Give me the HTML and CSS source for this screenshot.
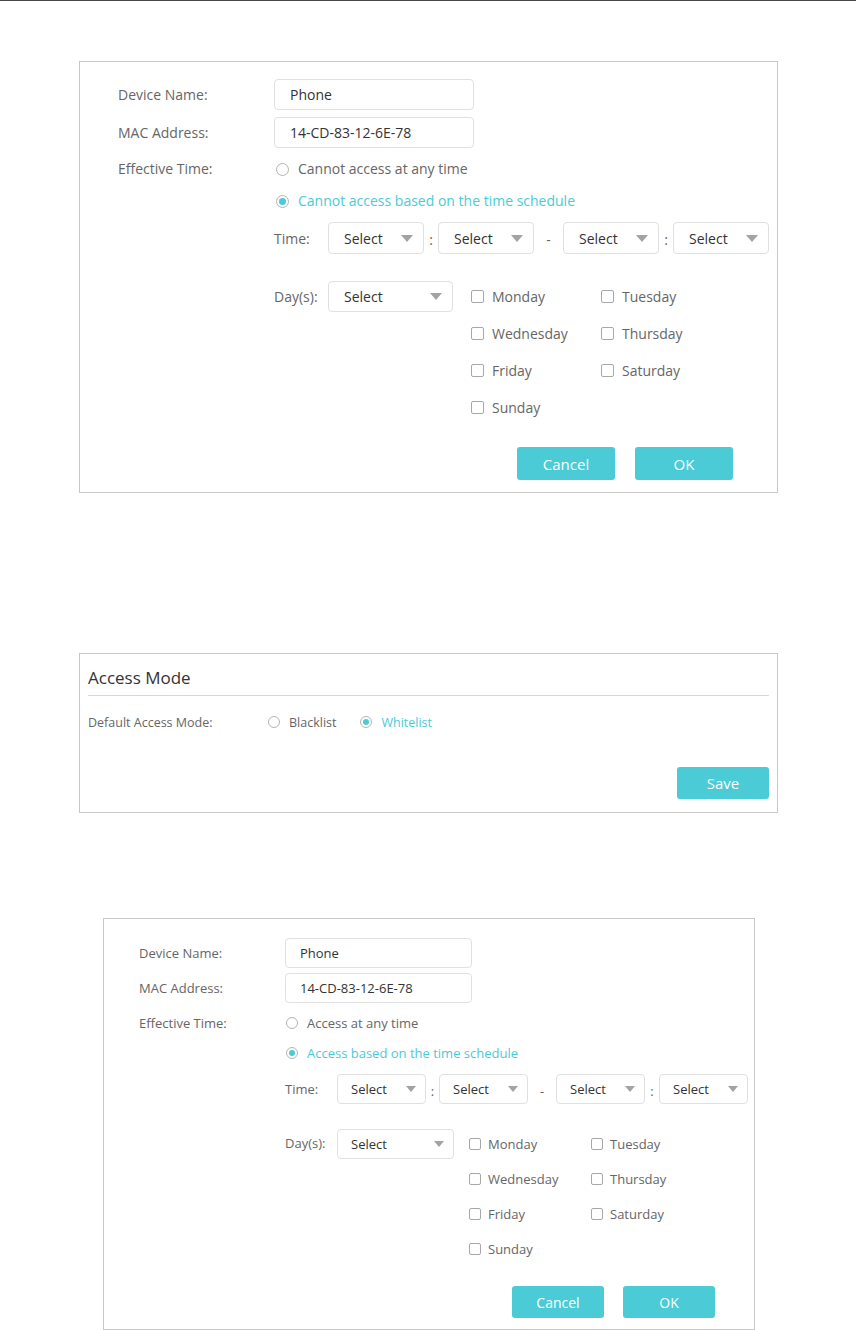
FILE: index.html
```html
<!DOCTYPE html>
<html>
<head>
  <meta charset="utf-8">
  <title>Access Control</title>
  <link rel="stylesheet" href="styles.css">
</head>
<body>
  <div class="top-rule"></div>

  <!-- Blacklist device form -->
  <div class="panel form form-a">
    <div class="field-row row-input">
      <label class="field-label">Device Name:</label>
      <div class="text-input">Phone</div>
    </div>
    <div class="field-row row-input">
      <label class="field-label">MAC Address:</label>
      <div class="text-input">14-CD-83-12-6E-78</div>
    </div>
    <div class="field-row row-radios">
      <label class="field-label radio-line">Effective Time:</label>
      <div class="radio-stack">
        <div class="radio radio-line"><span class="dot"></span>Cannot access at any time</div>
        <div class="radio radio-line checked"><span class="dot"></span>Cannot access based on the time schedule</div>
      </div>
    </div>
    <div class="field-row">
      <div class="field-label"></div>
      <div class="schedule">
        <div class="time-row">
          <span class="mini-label">Time:</span>
          <div class="select"><span>Select</span><i class="caret"></i></div>
          <span class="sep">:</span>
          <div class="select"><span>Select</span><i class="caret"></i></div>
          <span class="sep wide">-</span>
          <div class="select"><span>Select</span><i class="caret"></i></div>
          <span class="sep sep-last">:</span>
          <div class="select"><span>Select</span><i class="caret"></i></div>
        </div>
        <div class="days-row">
          <span class="mini-label">Day(s):</span>
          <div class="select day-select"><span>Select</span><i class="caret"></i></div>
          <div class="day-grid">
            <div class="check"><span class="box"></span>Monday</div>
            <div class="check"><span class="box"></span>Tuesday</div>
            <div class="check"><span class="box"></span>Wednesday</div>
            <div class="check"><span class="box"></span>Thursday</div>
            <div class="check"><span class="box"></span>Friday</div>
            <div class="check"><span class="box"></span>Saturday</div>
            <div class="check"><span class="box"></span>Sunday</div>
          </div>
        </div>
      </div>
    </div>
    <div class="actions">
      <button class="btn">Cancel</button>
      <button class="btn">OK</button>
    </div>
  </div>

  <!-- Access mode -->
  <div class="panel mode-panel">
    <div class="mode-title">Access Mode</div>
    <div class="mode-row">
      <label class="mode-label">Default Access Mode:</label>
      <div class="radio"><span class="dot"></span>Blacklist</div>
      <div class="radio checked"><span class="dot"></span>Whitelist</div>
    </div>
    <div class="mode-actions">
      <button class="btn btn-save">Save</button>
    </div>
  </div>

  <!-- Whitelist device form -->
  <div class="panel form form-b">
    <div class="field-row row-input">
      <label class="field-label">Device Name:</label>
      <div class="text-input">Phone</div>
    </div>
    <div class="field-row row-input">
      <label class="field-label">MAC Address:</label>
      <div class="text-input">14-CD-83-12-6E-78</div>
    </div>
    <div class="field-row row-radios">
      <label class="field-label radio-line">Effective Time:</label>
      <div class="radio-stack">
        <div class="radio radio-line"><span class="dot"></span>Access at any time</div>
        <div class="radio radio-line checked"><span class="dot"></span>Access based on the time schedule</div>
      </div>
    </div>
    <div class="field-row">
      <div class="field-label"></div>
      <div class="schedule">
        <div class="time-row">
          <span class="mini-label">Time:</span>
          <div class="select"><span>Select</span><i class="caret"></i></div>
          <span class="sep">:</span>
          <div class="select"><span>Select</span><i class="caret"></i></div>
          <span class="sep wide">-</span>
          <div class="select"><span>Select</span><i class="caret"></i></div>
          <span class="sep sep-last">:</span>
          <div class="select"><span>Select</span><i class="caret"></i></div>
        </div>
        <div class="days-row">
          <span class="mini-label">Day(s):</span>
          <div class="select day-select"><span>Select</span><i class="caret"></i></div>
          <div class="day-grid">
            <div class="check"><span class="box"></span>Monday</div>
            <div class="check"><span class="box"></span>Tuesday</div>
            <div class="check"><span class="box"></span>Wednesday</div>
            <div class="check"><span class="box"></span>Thursday</div>
            <div class="check"><span class="box"></span>Friday</div>
            <div class="check"><span class="box"></span>Saturday</div>
            <div class="check"><span class="box"></span>Sunday</div>
          </div>
        </div>
      </div>
    </div>
    <div class="actions">
      <button class="btn">Cancel</button>
      <button class="btn">OK</button>
    </div>
  </div>
</body>
</html>
```

FILE: styles.css
```css
* {
  margin: 0;
  padding: 0;
  box-sizing: border-box;
}

body {
  font-family: "Open Sans", "Liberation Sans", sans-serif;
  color: #666;
  background: #fff;
  width: 856px;
}

.top-rule {
  height: 1px;
  background: #474747;
}

.panel {
  border: 1px solid #c8c8c8;
  background: #fff;
}

/* ---------- device forms ---------- */

.form-a {
  margin: 60px 0 0 79px;
  width: 699px;
  padding: 17px 8px 12px 38px;
  font-size: 14px;
  --label-w: 156px;
  --input-w: 200px;
  --input-h: 31px;
  --line-h: 32px;
  --sel-w: 96px;
  --sel-h: 32px;
  --mini-w: 54px;
  --day-sel-w: 125px;
  --col-w: 130px;
  --row-h: 37px;
}

.form-b {
  margin: 105px 0 0 103px;
  width: 652px;
  padding: 19px 5px 11px 35px;
  font-size: 13px;
  --label-w: 146px;
  --input-w: 187px;
  --input-h: 30px;
  --line-h: 30px;
  --sel-w: 89px;
  --sel-h: 30px;
  --mini-w: 52px;
  --day-sel-w: 117px;
  --col-w: 122px;
  --row-h: 35px;
}

.field-row {
  display: flex;
  align-items: flex-start;
}

.field-label {
  width: var(--label-w);
  flex-shrink: 0;
  color: #666;
}

.row-input {
  align-items: center;
  height: var(--input-h);
  margin-bottom: 7px;
}

.form-b .row-input {
  margin-bottom: 5px;
}

.row-radios {
  margin-top: -2px;
}

.form-b .row-radios {
  margin-top: 0;
}

.radio-line {
  height: var(--line-h);
  line-height: var(--line-h);
}

.text-input {
  width: var(--input-w);
  height: var(--input-h);
  line-height: calc(var(--input-h) - 2px);
  border: 1px solid #e0e0e0;
  border-radius: 4px;
  padding-left: 15px;
  color: #333;
}

.form-b .text-input {
  padding-left: 14px;
}

.radio {
  display: flex;
  align-items: center;
  color: #666;
}

.radio .dot {
  width: 13px;
  height: 13px;
  border: 1px solid #b4b4b4;
  border-radius: 50%;
  margin: 0 9px 0 2px;
  flex-shrink: 0;
  position: relative;
}

.form-b .radio .dot {
  width: 12px;
  height: 12px;
  margin: 0 9px 0 1px;
}

.radio.checked {
  color: #4acbd6;
}

.radio.checked .dot::after {
  content: '';
  position: absolute;
  top: 50%;
  left: 50%;
  width: 7px;
  height: 7px;
  margin: -3.5px 0 0 -3.5px;
  border-radius: 50%;
  background: #4acbd6;
}

.form-b .radio.checked .dot::after {
  width: 6px;
  height: 6px;
  margin: -3px 0 0 -3px;
}

/* schedule */

.schedule {
  display: flex;
  flex-direction: column;
}

.time-row {
  display: flex;
  align-items: center;
  margin-top: 5px;
  height: var(--sel-h);
}

.form-b .time-row {
  margin-top: 6px;
}

.mini-label {
  width: var(--mini-w);
  flex-shrink: 0;
  color: #666;
}

.select {
  width: var(--sel-w);
  height: var(--sel-h);
  flex-shrink: 0;
  border: 1px solid #e0e0e0;
  border-radius: 4px;
  display: flex;
  align-items: center;
  justify-content: space-between;
  padding: 0 10px 0 15px;
  color: #333;
}

.form-b .select {
  padding: 0 9px 0 13px;
}

.caret {
  width: 0;
  height: 0;
  border-left: 6px solid transparent;
  border-right: 6px solid transparent;
  border-top: 7px solid #a3a3a3;
}

.form-b .caret {
  border-left-width: 5.5px;
  border-right-width: 5.5px;
  border-top-width: 6px;
}

.sep {
  width: 14px;
  flex-shrink: 0;
  text-align: center;
  color: #666;
  padding-top: 3px;
}

.sep.wide {
  width: 29px;
}

.form-b .sep {
  width: 13px;
}

.form-b .sep.wide {
  width: 28px;
}

.form-b .sep-last {
  width: 14px;
}

.days-row {
  display: flex;
  align-items: flex-start;
  margin-top: 24px;
}

.form-b .days-row {
  margin-top: 22px;
}

.days-row .mini-label {
  height: var(--row-h);
  line-height: var(--row-h);
}

.day-select {
  width: var(--day-sel-w);
  margin-top: 3px;
  height: 31px;
}

.form-b .day-select {
  height: 30px;
}

.day-grid {
  display: grid;
  grid-template-columns: var(--col-w) var(--col-w);
  grid-auto-rows: var(--row-h);
  margin-left: 18px;
}

.form-b .day-grid {
  margin-left: 15px;
}

.check {
  display: flex;
  align-items: center;
  color: #666;
}

.check .box {
  width: 13px;
  height: 13px;
  border: 1px solid #a8a8a8;
  border-radius: 2px;
  margin-right: 8px;
  flex-shrink: 0;
}

.form-b .check .box {
  width: 12px;
  height: 12px;
  margin-right: 7px;
}

.actions {
  display: flex;
  justify-content: flex-end;
  gap: 20px;
  margin: 21px 36px 0 0;
}

.form-b .actions {
  gap: 19px;
  margin: 20px 34px 0 0;
}

.btn {
  font-family: inherit;
  width: 98px;
  height: 33px;
  border: none;
  border-radius: 3px;
  background: #4acbd6;
  color: #fff;
  font-size: 15px;
  cursor: pointer;
}

.form-b .btn {
  width: 92px;
  height: 32px;
  font-size: 14px;
}

/* ---------- access mode ---------- */

.mode-panel {
  margin: 160px 0 0 79px;
  width: 699px;
  padding: 12px 8px 13px 8px;
}

.mode-title {
  font-size: 17px;
  color: #333;
  line-height: 24px;
  padding-bottom: 5px;
  border-bottom: 1px solid #d8d8d8;
}

.mode-row {
  display: flex;
  align-items: center;
  height: 24px;
  margin-top: 14px;
  font-size: 12.5px;
}

.mode-label {
  width: 180px;
  flex-shrink: 0;
}

.mode-row .radio {
  margin-right: 24px;
}

.mode-row .radio .dot {
  width: 12px;
  height: 12px;
  margin: 0 9px 0 0;
}

.mode-row .radio.checked .dot::after {
  width: 6px;
  height: 6px;
  margin: -3px 0 0 -3px;
}

.mode-actions {
  display: flex;
  justify-content: flex-end;
  margin-top: 33px;
}

.btn-save {
  width: 92px;
  height: 32px;
}
```
